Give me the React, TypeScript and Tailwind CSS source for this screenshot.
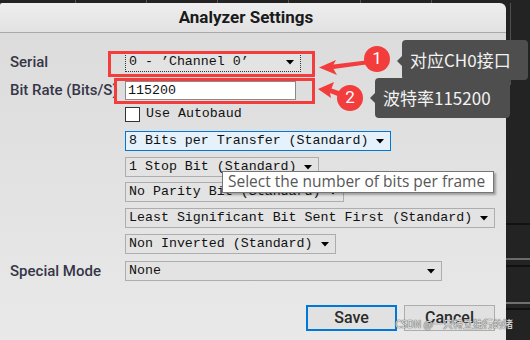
import React from "react";

const mono = "font-['Liberation_Mono',monospace] text-[13.3px] text-[#111]";
const combo =
  "flex items-center justify-between h-[20px] border border-[#adadad] bg-[#e3e3e3] pl-[3px] pr-[6px] font-['Liberation_Mono',monospace] text-[13.3px] text-[#111] whitespace-pre";
const label =
  "w-[115px] shrink-0 font-['Roboto',sans-serif] font-medium text-[15px] text-[#363648] whitespace-nowrap";

function Tri() {
  return (
    <svg width="8" height="5" viewBox="0 0 8 5" className="shrink-0">
      <path d="M0 0 L8 0 L4 4.5 Z" fill="#000" />
    </svg>
  );
}

export default function App() {
  return (
    <div className="relative w-[530px] h-[340px] overflow-hidden bg-[#232323] flex flex-col">
      {/* top strip */}
      <div className="h-[3px] flex shrink-0">
        <div className="w-[76px] border-r border-[#555]" />
        <div className="w-[71px] border-r border-[#555]" />
        <div className="w-[71px] border-r border-[#555]" />
        <div className="w-[71px] border-r border-[#555]" />
        <div className="w-[72px] border-r border-[#555]" />
        <div className="w-[71px] border-r border-[#555]" />
      </div>
      <div className="flex flex-1">
        {/* dialog */}
        <div className="w-[506px] shrink-0 flex flex-col rounded-tr-[6px] rounded-tl-[2px] overflow-hidden">
          <div className="h-[30px] shrink-0 flex items-center justify-center bg-gradient-to-b from-[#eeeeee] to-[#e2e2e2] border-b border-[#a8a8a8]">
            <span className="font-['Roboto',sans-serif] font-bold text-[17px] text-[#1a1a1a] -ml-[14px]">
              Analyzer Settings
            </span>
          </div>
          <div className="flex-1 flex flex-col pl-[10px] pt-[19px] bg-gradient-to-b from-[#dcdcdc] to-[#e9e9e9]">
            <div className="flex items-center h-[20px]">
              <div className={label}>Serial</div>
              <div className="w-[176px] flex items-center justify-between h-[20px] border border-dotted border-[#333] bg-[#e3e3e3] pl-[3px] pr-[6px] font-['Liberation_Mono',monospace] text-[13.3px] text-[#111] whitespace-pre">
                <span>0 - ’Channel 0’</span>
                <Tri />
              </div>
            </div>
            <div className="flex items-center h-[19px] mt-[9px]">
              <div className={label}>Bit Rate (Bits/S)</div>
              <div className={"w-[171px] h-[19px] flex items-center border border-[#8a8a8a] bg-white pl-[2px] " + mono}>
                115200
              </div>
            </div>
            <div className="flex items-center h-[16px] mt-[6px]">
              <div className="w-[115px] shrink-0" />
              <div className="w-[15px] h-[15px] border border-[#333] bg-white" />
              <span className={"ml-[6px] " + mono}>Use Autobaud</span>
            </div>
            <div className="flex items-center mt-[9px]">
              <div className="w-[115px] shrink-0" />
              <div className="w-[266px] flex items-center justify-between h-[20px] border border-[#0078d7] bg-[#e5f1fb] pl-[3px] pr-[6px] font-['Liberation_Mono',monospace] text-[13.3px] text-[#111] whitespace-pre">
                <span>8 Bits per Transfer (Standard)</span>
                <Tri />
              </div>
            </div>
            <div className="flex items-center mt-[6px]">
              <div className="w-[115px] shrink-0" />
              <div className={"w-[194px] " + combo}>
                <span>1 Stop Bit (Standard)</span>
                <Tri />
              </div>
            </div>
            <div className="flex items-center mt-[5px]">
              <div className="w-[115px] shrink-0" />
              <div className={"w-[219px] " + combo}>
                <span>No Parity Bit (Standard)</span>
                <Tri />
              </div>
            </div>
            <div className="flex items-center mt-[6px]">
              <div className="w-[115px] shrink-0" />
              <div className={"w-[370px] " + combo}>
                <span>Least Significant Bit Sent First (Standard)</span>
                <Tri />
              </div>
            </div>
            <div className="flex items-center mt-[6px]">
              <div className="w-[115px] shrink-0" />
              <div className={"w-[211px] " + combo}>
                <span>Non Inverted (Standard)</span>
                <Tri />
              </div>
            </div>
            <div className="flex items-center mt-[6px]">
              <div className={label}>Special Mode</div>
              <div className={"w-[317px] " + combo}>
                <span>None</span>
                <Tri />
              </div>
            </div>
            <div className="flex justify-end gap-[7px] pr-[11px] mt-[22px]">
              <div className="w-[91px] h-[26px] flex items-center justify-center border-2 border-[#0078d7] bg-[#e1e1e1] font-['Roboto',sans-serif] font-medium text-[16px] text-[#2b2b2b]">
                Save
              </div>
              <div className="w-[91px] h-[26px] flex items-center justify-center border border-[#adadad] bg-[#e1e1e1] font-['Roboto',sans-serif] font-medium text-[16px] text-[#2b2b2b]">
                Cancel
              </div>
            </div>
          </div>
        </div>
        {/* right dark strip */}
        <div className="flex-1 flex flex-col">
          <div className="h-[82px] ml-[4px] border-l border-[#505050]" />
          <div className="h-[138px]" />
          <div className="h-[2px] bg-[#111]" />
          <div className="h-[33px]" />
          <div className="h-[2px] bg-[#6a6a6a]" />
          <div className="h-[5px]" />
          <div className="h-[2px] bg-[#111]" />
          <div className="h-[35px]" />
          <div className="h-[2px] bg-[#707070]" />
          <div className="h-[4px]" />
          <div className="h-[2px] bg-[#111]" />
        </div>
      </div>

      {/* tooltip */}
      <div className="absolute left-[222px] top-[171px] w-[272px] h-[22px] flex items-center pl-[5px] bg-white border border-[#767676] shadow-[2px_2px_2px_rgba(0,0,0,0.3)] font-['Open_Sans',sans-serif] text-[15.5px] leading-none text-[#575757] whitespace-nowrap">
        Select the number of bits per frame
      </div>

      {/* red highlight boxes */}
      <div className="absolute left-[108px] top-[51px] w-[207px] h-[26px] border-[3px] border-[#f33c3c]" />
      <div className="absolute left-[114px] top-[78px] w-[201px] h-[26px] border-[3px] border-[#f33c3c]" />

      {/* arrows */}
      <svg className="absolute left-0 top-0" width="530" height="340" viewBox="0 0 530 340">
        <polygon
          points="319,67.5 336,60 333.5,64.5 366,60.5 366,64.5 333.5,69 337,75"
          fill="#f33c3c"
        />
        <polygon
          points="318,89 334,82 331.5,88.5 342,92 340,97 330,93 331,98"
          fill="#f33c3c"
        />
      </svg>

      {/* numbered circles */}
      <div className="absolute left-[364px] top-[46px] w-[26px] h-[26px] rounded-full bg-[#f33c3c] flex items-center justify-center font-['Roboto',sans-serif] text-[17px] text-white">
        1
      </div>
      <div className="absolute left-[337px] top-[85px] w-[26px] h-[26px] rounded-full bg-[#f33c3c] flex items-center justify-center font-['Roboto',sans-serif] text-[17px] text-white">
        2
      </div>

      {/* callouts */}
      <div className="absolute left-[402px] top-[40px] w-[126px] h-[40px] rounded-[4px] bg-[#4e4e4e] flex items-center pl-[8px] font-['Noto_Sans_CJK_SC','Noto_Sans',sans-serif] text-[17px] text-[#f2f2f2] whitespace-nowrap">
        <div className="absolute left-[-5px] top-[16px] w-0 h-0 border-y-[5px] border-y-transparent border-r-[5px] border-r-[#4e4e4e]" />
        对应CH0接口
      </div>
      <div className="absolute left-[375px] top-[78px] w-[135px] h-[40px] rounded-[4px] bg-[#4e4e4e] flex items-center pl-[8px] font-['Noto_Sans_CJK_SC','Noto_Sans',sans-serif] text-[17px] text-[#f2f2f2] whitespace-nowrap">
        <div className="absolute left-[-5px] top-[15px] w-0 h-0 border-y-[5px] border-y-transparent border-r-[5px] border-r-[#4e4e4e]" />
        波特率115200
      </div>

      {/* watermark */}
      <div className="absolute left-[395px] top-[317px] font-['Noto_Sans_CJK_SC',sans-serif] text-[10px] leading-[14px] text-[#e4e4e4] [text-shadow:0_0_1px_#444,0_0_1px_#444] whitespace-nowrap">
        CSDN @一只特立独行的猪
      </div>
    </div>
  );
}
